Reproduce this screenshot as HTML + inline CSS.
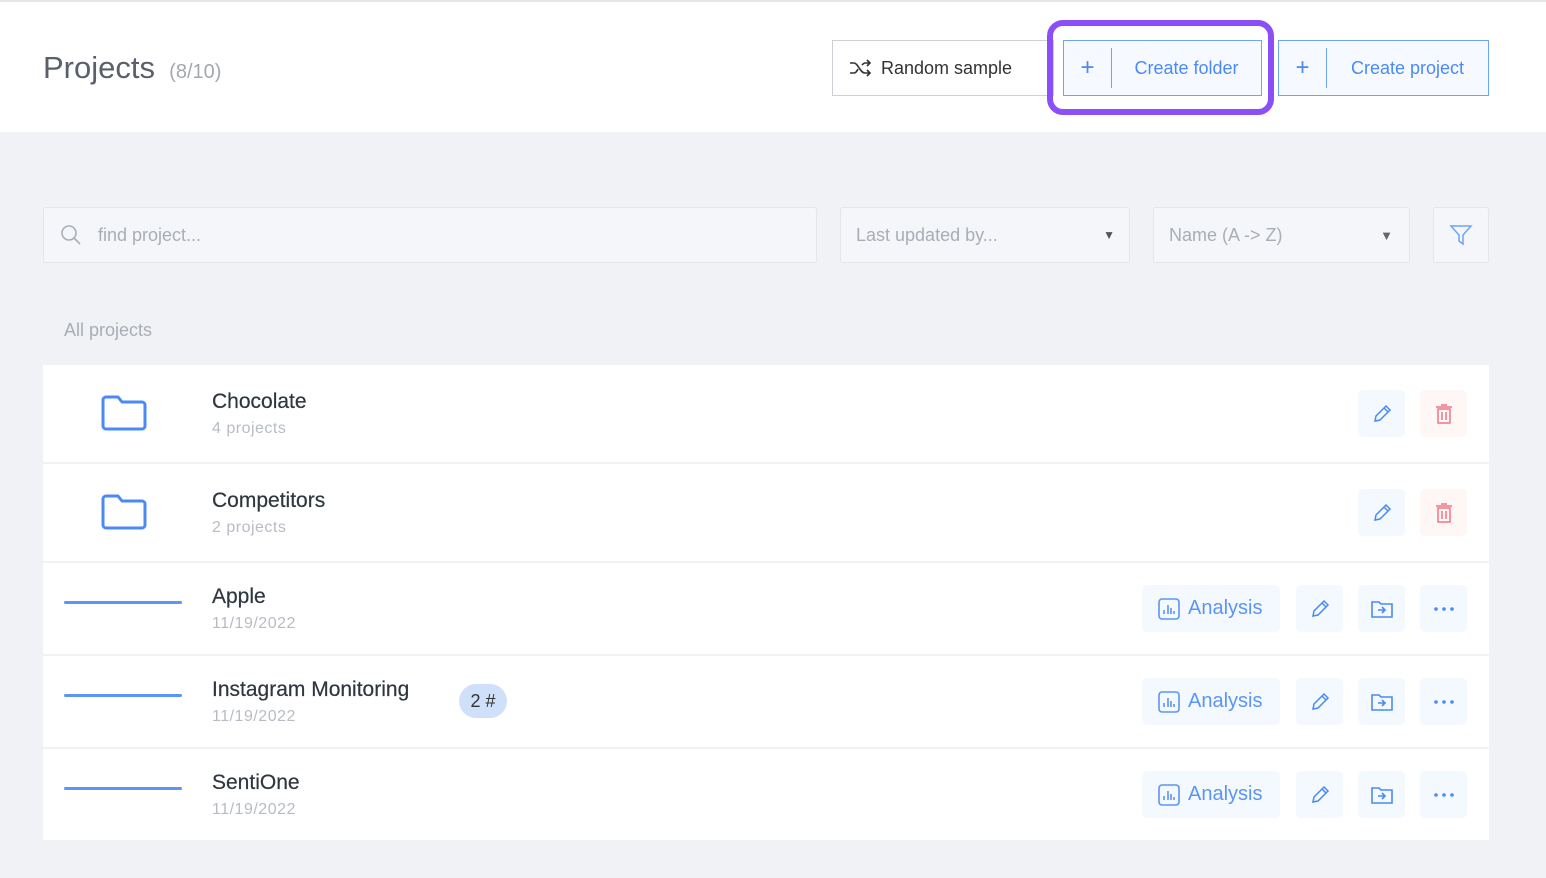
<!DOCTYPE html>
<html><head><style>
*{box-sizing:border-box;margin:0;padding:0}
body{width:1546px;height:878px;background:#f0f2f6;font-family:"Liberation Sans",sans-serif;position:relative;overflow:hidden}
.abs{position:absolute}
.hdr{left:0;top:0;width:1546px;height:132px;background:#fff;border-top:2px solid #e4e6ea}
.btn{position:absolute;height:56px;border:1px solid #ccd0d6;background:#fff;display:flex;align-items:center;font-size:18px}
.bb{border-color:#6fa4f5;background:#f6f9ff;color:#4a8af4}
.bb .pl{width:48px;text-align:center;font-size:24px;font-weight:300;border-right:1px solid #6fa4f5;height:40px;line-height:40px}
.bb .t{flex:1;text-align:center}
.inp{position:absolute;top:207px;height:56px;background:#f4f6f9;border:1px solid #e3e6eb;border-radius:3px;color:#a9aeb6;font-size:18px;display:flex;align-items:center}
.card{position:absolute;left:43px;width:1446px;background:#fff}
.name{position:absolute;left:212px;font-size:21px;color:#2f3640;-webkit-text-stroke:0.2px #2f3640}
.sub{position:absolute;left:212px;font-size:16px;color:#b7bcc4;letter-spacing:.5px}
.ib{position:absolute;width:47px;height:47px;background:#f4f8ff;border-radius:5px;display:flex;align-items:center;justify-content:center}
.an{position:absolute;left:1142px;width:138px;height:47px;background:#f4f8ff;border-radius:5px;color:#5b95f5;font-size:20px;display:flex;align-items:center;gap:8px;padding-left:16px}
.line{position:absolute;left:64px;width:118px;height:3px;background:#5b95f5;border-radius:2px}
</style></head><body>
<div class="abs hdr"></div>
<div class="abs" style="left:43px;top:50px;font-size:31px;color:#59606b;font-weight:300">Projects <span style="font-size:20px;color:#a3a8b0">&nbsp;(8/10)</span></div>
<div class="btn" style="left:832px;top:40px;width:222px;color:#333;padding-left:16px;gap:8px">
<svg width="24" height="18" viewBox="0 0 24 18" fill="none" stroke="#333" stroke-width="1.6"><path d="M1 4h4c4 0 6 10 11 10h5M1 14h4c2 0 3-2 4-4M13 6c1-1 2-2 3-2h5M18 1l3 3-3 3M18 11l3 3-3 3"/></svg>Random sample</div>
<div class="btn bb" style="left:1063px;top:40px;width:199px"><div class="pl">+</div><div class="t">Create folder</div></div>
<div class="abs" style="left:1047px;top:20px;width:227px;height:95px;border:6px solid #8a4ff7;border-radius:16px"></div>
<div class="btn bb" style="left:1278px;top:40px;width:211px"><div class="pl">+</div><div class="t">Create project</div></div>

<div class="inp" style="left:43px;width:774px;padding-left:16px;gap:16px"><svg width="22" height="22" viewBox="0 0 22 22" fill="none" stroke="#a9aeb6" stroke-width="1.6"><circle cx="9" cy="9" r="7"/><path d="M14 14l6 6"/></svg>find project...</div>
<div class="inp" style="left:840px;width:290px;padding-left:15px">Last updated by...<span style="position:absolute;right:14px;font-size:12px;color:#555">▼</span></div>
<div class="inp" style="left:1153px;width:257px;padding-left:15px">Name (A -&gt; Z)<span style="position:absolute;right:16px;font-size:13px;color:#666">▼</span></div>
<div class="inp" style="left:1433px;width:56px;justify-content:center"><svg width="24" height="24" viewBox="0 0 24 24" fill="none" stroke="#6fa4f5" stroke-width="1.5"><path d="M2 3h20l-8 9v9l-4-3v-6z"/></svg></div>
<div class="abs" style="left:64px;top:320px;font-size:18px;color:#a9aeb6">All projects</div>

<div class="card" style="top:365px;height:97px"></div>
<div class="card" style="top:464px;height:97px"></div>
<div class="card" style="top:563px;height:91px"></div>
<div class="card" style="top:656px;height:91px"></div>
<div class="card" style="top:749px;height:91px"></div>

<svg class="abs" style="left:101px;top:394px" width="48" height="38" viewBox="0 0 48 38" fill="none" stroke="#4a8af4" stroke-width="3" stroke-linejoin="round"><path d="M5 3h12l4 5h20a3 3 0 0 1 3 3v21a3 3 0 0 1-3 3H5a3 3 0 0 1-3-3V6a3 3 0 0 1 3-3z"/></svg>
<svg class="abs" style="left:101px;top:493px" width="48" height="38" viewBox="0 0 48 38" fill="none" stroke="#4a8af4" stroke-width="3" stroke-linejoin="round"><path d="M5 3h12l4 5h20a3 3 0 0 1 3 3v21a3 3 0 0 1-3 3H5a3 3 0 0 1-3-3V6a3 3 0 0 1 3-3z"/></svg>
<div class="name" style="top:390px">Chocolate</div><div class="sub" style="top:420px">4 projects</div>
<div class="name" style="top:489px">Competitors</div><div class="sub" style="top:519px">2 projects</div>

<div class="line" style="top:601px"></div><div class="line" style="top:694px"></div><div class="line" style="top:787px"></div>
<div class="name" style="top:585px">Apple</div><div class="sub" style="top:615px">11/19/2022</div>
<div class="name" style="top:678px">Instagram Monitoring</div><div class="sub" style="top:708px">11/19/2022</div>
<div class="abs" style="left:459px;top:684px;width:48px;height:34px;border-radius:17px;background:#cfe0fb;color:#333;font-size:18px;text-align:center;line-height:34px">2 #</div>
<div class="name" style="top:771px">SentiOne</div><div class="sub" style="top:801px">11/19/2022</div>

<div class="ib" style="left:1358px;top:390px"><svg width="22" height="22" viewBox="0 0 22 22" fill="none" stroke="#4a8af4" stroke-width="1.5"><path d="M4 18l1-5L15 3l4 4L9 17z M13 5l4 4"/></svg></div>
<div class="ib" style="left:1420px;top:390px;background:#fff6f6"><svg width="18" height="20" viewBox="0 0 18 20" fill="none" stroke="#f07585" stroke-width="1.5"><path d="M1 3h16M6 1h6M3 5h12v14H3zM7 8v8M11 8v8"/></svg></div>
<div class="ib" style="left:1358px;top:489px"><svg width="22" height="22" viewBox="0 0 22 22" fill="none" stroke="#4a8af4" stroke-width="1.5"><path d="M4 18l1-5L15 3l4 4L9 17z M13 5l4 4"/></svg></div>
<div class="ib" style="left:1420px;top:489px;background:#fff6f6"><svg width="18" height="20" viewBox="0 0 18 20" fill="none" stroke="#f07585" stroke-width="1.5"><path d="M1 3h16M6 1h6M3 5h12v14H3zM7 8v8M11 8v8"/></svg></div>

<div class="an" style="top:585px"><svg width="22" height="22" viewBox="0 0 22 22" fill="none" stroke="#5b95f5" stroke-width="1.6"><rect x="1" y="1" width="20" height="20" rx="3"/><path d="M6 16v-4M10 16V7M13 16v-6M16 16v-3"/></svg>Analysis</div>
<div class="an" style="top:678px"><svg width="22" height="22" viewBox="0 0 22 22" fill="none" stroke="#5b95f5" stroke-width="1.6"><rect x="1" y="1" width="20" height="20" rx="3"/><path d="M6 16v-4M10 16V7M13 16v-6M16 16v-3"/></svg>Analysis</div>
<div class="an" style="top:771px"><svg width="22" height="22" viewBox="0 0 22 22" fill="none" stroke="#5b95f5" stroke-width="1.6"><rect x="1" y="1" width="20" height="20" rx="3"/><path d="M6 16v-4M10 16V7M13 16v-6M16 16v-3"/></svg>Analysis</div>

<div class="ib" style="left:1296px;top:585px"><svg width="22" height="22" viewBox="0 0 22 22" fill="none" stroke="#4a8af4" stroke-width="1.5"><path d="M4 18l1-5L15 3l4 4L9 17z M13 5l4 4"/></svg></div>
<div class="ib" style="left:1296px;top:678px"><svg width="22" height="22" viewBox="0 0 22 22" fill="none" stroke="#4a8af4" stroke-width="1.5"><path d="M4 18l1-5L15 3l4 4L9 17z M13 5l4 4"/></svg></div>
<div class="ib" style="left:1296px;top:771px"><svg width="22" height="22" viewBox="0 0 22 22" fill="none" stroke="#4a8af4" stroke-width="1.5"><path d="M4 18l1-5L15 3l4 4L9 17z M13 5l4 4"/></svg></div>

<div class="ib" style="left:1358px;top:585px"><svg width="22" height="18" viewBox="0 0 22 18" fill="none" stroke="#4a8af4" stroke-width="1.6"><path d="M1 2h7l2 2h11v13H1z"/><path d="M7 10h7M11 7l3 3-3 3"/></svg></div>
<div class="ib" style="left:1358px;top:678px"><svg width="22" height="18" viewBox="0 0 22 18" fill="none" stroke="#4a8af4" stroke-width="1.6"><path d="M1 2h7l2 2h11v13H1z"/><path d="M7 10h7M11 7l3 3-3 3"/></svg></div>
<div class="ib" style="left:1358px;top:771px"><svg width="22" height="18" viewBox="0 0 22 18" fill="none" stroke="#4a8af4" stroke-width="1.6"><path d="M1 2h7l2 2h11v13H1z"/><path d="M7 10h7M11 7l3 3-3 3"/></svg></div>

<div class="ib" style="left:1420px;top:585px"><svg width="20" height="4"><circle cx="2" cy="2" r="1.8" fill="#4a8af4"/><circle cx="10" cy="2" r="1.8" fill="#4a8af4"/><circle cx="18" cy="2" r="1.8" fill="#4a8af4"/></svg></div>
<div class="ib" style="left:1420px;top:678px"><svg width="20" height="4"><circle cx="2" cy="2" r="1.8" fill="#4a8af4"/><circle cx="10" cy="2" r="1.8" fill="#4a8af4"/><circle cx="18" cy="2" r="1.8" fill="#4a8af4"/></svg></div>
<div class="ib" style="left:1420px;top:771px"><svg width="20" height="4"><circle cx="2" cy="2" r="1.8" fill="#4a8af4"/><circle cx="10" cy="2" r="1.8" fill="#4a8af4"/><circle cx="18" cy="2" r="1.8" fill="#4a8af4"/></svg></div>
</body></html>
